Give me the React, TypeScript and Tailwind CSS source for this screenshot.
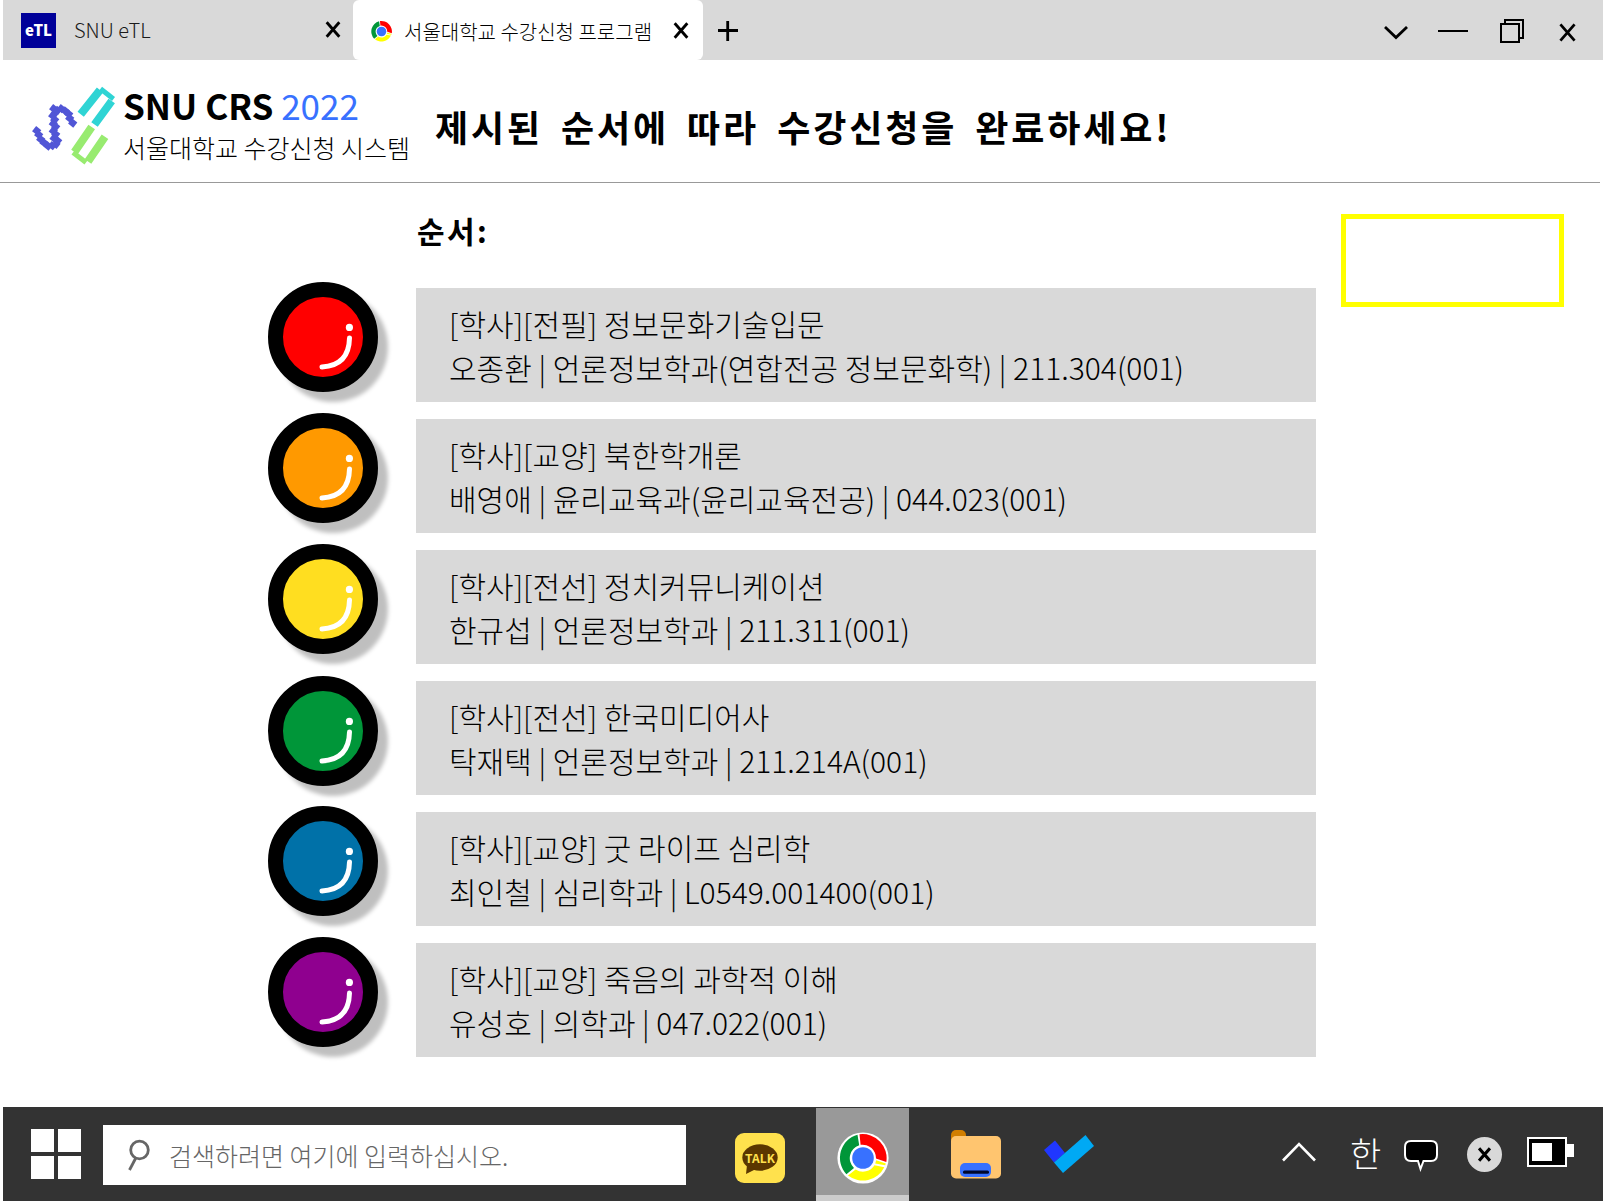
import React from "react";

const KR = "font-['Noto_Sans_CJK_KR',sans-serif]";

const courses = [
  { color: "bg-[#ff0000]", title: "[학사][전필] 정보문화기술입문", info: "오종환 | 언론정보학과(연합전공 정보문화학) | 211.304(001)" },
  { color: "bg-[#ff9900]", title: "[학사][교양] 북한학개론", info: "배영애 | 윤리교육과(윤리교육전공) | 044.023(001)" },
  { color: "bg-[#ffde20]", title: "[학사][전선] 정치커뮤니케이션", info: "한규섭 | 언론정보학과 | 211.311(001)" },
  { color: "mt-px -mb-px bg-[#009639]", title: "[학사][전선] 한국미디어사", info: "탁재택 | 언론정보학과 | 211.214A(001)" },
  { color: "bg-[#0071a8]", title: "[학사][교양] 굿 라이프 심리학", info: "최인철 | 심리학과 | L0549.001400(001)" },
  { color: "bg-[#8f008f]", title: "[학사][교양] 죽음의 과학적 이해", info: "유성호 | 의학과 | 047.022(001)" },
];

function Cross({ className, width = 3 }: { className: string; width?: number }) {
  return (
    <svg viewBox="0 0 16 18" className={className} stroke="#000" strokeWidth={width} fill="none">
      <path d="M1.3 1.3 L14.7 16.7 M14.7 1.3 L1.3 16.7" strokeLinecap="butt" />
    </svg>
  );
}

function Chrome({ className }: { className: string }) {
  return (
    <svg viewBox="0 0 52 52" className={className}>
      <circle cx="26" cy="26" r="25.6" fill="#fff" />
      <path d="M20.5 2.7 A24 24 0 0 0 9.4 42.2 L17 36 A13.5 13.5 0 0 1 22.2 13.3 Z" fill="#009639" />
      <path d="M22.5 2.3 A24 24 0 0 1 49.3 30 L39 26.5 A13.5 13.5 0 0 0 23.6 12.8 Z" fill="#ff0000" />
      <path d="M39.2 28.2 L48.8 31.5 L48.2 33.3 L38.2 31.6 Z" fill="#ffff00" />
      <path d="M11 43.5 A24 24 0 0 0 47.3 35.2 L37.5 33.3 A13.5 13.5 0 0 1 18.6 37.4 Z" fill="#ffff00" />
      <circle cx="26" cy="26" r="10.8" fill="#3871ff" />
    </svg>
  );
}

function Tabs() {
  return (
    <div className="ml-[3px] flex h-[60px] bg-[#d9d9d9]">
      <div className="flex w-[350px] items-center">
        <div className="ml-[18px] flex size-[35px] items-center justify-center bg-[#000099] pb-[1px] text-[15px] font-black leading-none text-white">
          eTL
        </div>
        <span className="ml-[18px] text-[20px] font-light leading-none text-[#1a1a1a]">SNU eTL</span>
        <Cross className="mr-[12px] mb-[2px] ml-auto h-[17px] w-[16px]" />
      </div>
      <div className="flex w-[350px] items-center rounded-[6px] bg-white">
        <Chrome className="mt-[3px] ml-[17px] size-[23px]" />
        <span className="mt-[4px] ml-[11px] text-[20px] font-light leading-none whitespace-nowrap text-black">서울대학교 수강신청 프로그램</span>
        <Cross className="mr-[14px] ml-auto h-[17px] w-[16px]" />
      </div>
      <svg viewBox="0 0 20 20" className="mt-[21px] ml-[15px] size-[20px]" stroke="#000" strokeWidth="2.8">
        <path d="M0 9.5H20M9.7 0V20" />
      </svg>
      <div className="mr-[27px] ml-auto flex items-center">
        <svg viewBox="0 0 24 14" className="mt-[5px] h-[14px] w-[24px]" fill="none" stroke="#000" strokeWidth="2.8">
          <path d="M1 1 L12 11.5 L23 1" />
        </svg>
        <div className="mt-[2px] ml-[30px] h-[2px] w-[30px] bg-black" />
        <svg viewBox="0 0 24 24" className="mt-[2px] ml-[32px] size-[24px]" fill="none" stroke="#000" strokeWidth="2">
          <path d="M1 5H19V23H1Z M5 5V1H23V19H19" />
        </svg>
        <Cross className="mt-[4px] ml-[35px] h-[19px] w-[17px]" width={2.6} />
      </div>
    </div>
  );
}

// Centres of the tilted blocks that form the S of the logo.
const blocks = [
  [6.7, 46.7], [8.7, 50.7], [10.7, 55.3], [14, 58.7], [18, 62], [22.3, 61.7], [26, 60.3], [27.7, 56.7],
  [24, 54.3], [25.7, 50.3], [23.3, 47], [25.7, 42.7], [23.3, 39.7], [24.7, 35.7], [22.7, 31.7], [25.3, 28.7],
  [23.7, 24.7], [27.5, 26.3], [31.3, 24.7], [35.3, 27], [38.7, 30], [39.7, 34.3], [42.7, 39],
];

function Logo() {
  return (
    <svg viewBox="0 0 90 84" className="mt-[24px] ml-[30px] h-[84px] w-[90px] shrink-0" fill="none">
      <path d="M50.700 30.300 L70 6 M81.700 17 L64.500 40.500" stroke="#2fd4d4" strokeWidth="8" />
      <path d="M70.500 4.800 L83.500 15" stroke="#2fd4d4" strokeWidth="5" />
      <path d="M61.700 43 L44.500 68 M75 52.700 L58 77.500" stroke="#98eb70" strokeWidth="8" />
      <path d="M43 68.500 L56 78.500" stroke="#98eb70" strokeWidth="5" />
      {blocks.map(([x, y], i) => (
        <rect key={i} x={x - 3.3} y={y - 3.3} width="6.600" height="6.600" fill="#5156d6" transform={`rotate(38 ${x} ${y})`} />
      ))}
    </svg>
  );
}

function Header() {
  return (
    <header className="mr-[3px] flex h-[123px] border-b border-[#999]">
      <Logo />
      <div className="ml-[3px] flex w-[300px] shrink-0 flex-col whitespace-nowrap text-black">
        <div className="mt-[19px] text-[35px] leading-[52px]">
          <span className="font-bold">SNU CRS</span> <span className="text-[#3871ff]">2022</span>
        </div>
        <div className="-mt-[2px] text-[25px] font-light leading-[36px]">서울대학교 수강신청 시스템</div>
      </div>
      <h1 className="mt-[41px] ml-[12px] text-[36px] font-bold leading-[50px] tracking-[2.88px] whitespace-nowrap [word-spacing:7px]">
        제시된 순서에 따라 수강신청을 완료하세요!
      </h1>
    </header>
  );
}

function Knob({ color }: { color: string }) {
  return (
    <div className={"size-[110px] shrink-0 rounded-full border-[15px] border-black shadow-[10px_10px_4px_rgba(0,0,0,0.25)] " + color}>
      <svg viewBox="0 0 80 80" className="size-[80px]" fill="none">
        <circle cx="66.400" cy="30.400" r="3.600" fill="#fff" />
        <path d="M66.500 41 Q66 68.500 39 70" stroke="#fff" strokeWidth="5" strokeLinecap="round" />
      </svg>
    </div>
  );
}

function Taskbar() {
  return (
    <footer className="ml-[3px] flex h-[94px] bg-[#333]">
      <div className="mt-[22px] ml-[28px] grid h-[50px] w-[50px] shrink-0 grid-cols-2 gap-[4px]">
        <div className="bg-white" />
        <div className="bg-white" />
        <div className="bg-white" />
        <div className="bg-white" />
      </div>
      <div className="mt-[18px] ml-[22px] flex h-[60px] w-[583px] shrink-0 items-center bg-white">
        <svg viewBox="0 0 22 32" className="-mt-[1px] ml-[25px] h-[32px] w-[22px]" fill="none" stroke="#666" strokeWidth="2.800">
          <circle cx="11.500" cy="11" r="8.800" />
          <path d="M7.800 19 L1.500 31" />
        </svg>
        <span className="ml-[19px] text-[25px] font-light leading-none whitespace-nowrap text-[#666]">검색하려면 여기에 입력하십시오.</span>
      </div>
      <div className="relative mt-[26px] ml-[49px] flex size-[50px] items-center justify-center rounded-[9px] bg-[#ffe14d]">
        <svg viewBox="0 0 36 30" className="absolute top-[11px] left-[7px] h-[30px] w-[36px]" fill="#5b3700">
          <ellipse cx="18" cy="13.500" rx="17.700" ry="13.200" />
          <path d="M5 21 L4 30 L14 25 Z" />
        </svg>
        <span className="relative text-[12px] font-bold leading-none text-[#ffe14d]">TALK</span>
      </div>
      <div className="mt-[1px] ml-[31px] flex h-[93px] w-[93px] justify-center border-b-[6px] border-[#ccc] bg-[#999]">
        <Chrome className="mt-[24px] size-[52px]" />
      </div>
      <svg viewBox="0 0 50 50" className="mt-[22px] ml-[42px] size-[50px]">
        <rect x="0" y="1" width="15" height="20" rx="5" fill="#d17e00" />
        <rect x="0" y="7" width="50" height="42.500" rx="5" fill="#ffc56f" />
        <rect x="9" y="34" width="31" height="14" rx="5" fill="#3871ff" />
        <rect x="12" y="41.500" width="26" height="3.200" rx="1.500" fill="#00082e" />
      </svg>
      <svg viewBox="0 0 50 38" className="mt-[28px] ml-[43px] h-[38px] w-[50px]">
        <path d="M0 15 L11 5.500 L21 18 L10 27.500 Z" fill="#2037ff" />
        <path d="M10 27.500 L41.500 0 L50 11 L19 38 Z" fill="#00a9f4" />
      </svg>
      <div className="mr-[29px] ml-auto flex items-start">
        <svg viewBox="0 0 34 20" className="mt-[35px] h-[20px] w-[34px]" fill="none" stroke="#fff" strokeWidth="2.600">
          <path d="M1 18.500 L17 2 L33 18.500" />
        </svg>
        <span className="mt-[28px] ml-[34px] w-[34px] text-[34px] font-light leading-[36px] text-white">한</span>
        <svg viewBox="0 0 34 32" className="mt-[33px] ml-[20px] h-[32px] w-[34px]" fill="#000" stroke="#fff" strokeWidth="2">
          <path d="M7 1H27Q33 1 33 7V15Q33 21 27 21H19.500L16.500 29L14 21H7Q1 21 1 15V7Q1 1 7 1Z" />
        </svg>
        <div className="mt-[30px] ml-[29px] flex size-[35px] items-center justify-center rounded-full bg-[#d9d9d9]">
          <Cross className="h-[15px] w-[13px]" width={3.8} />
        </div>
        <svg viewBox="0 0 47 30" className="mt-[30px] ml-[25px] h-[30px] w-[47px]">
          <rect x="1" y="1" width="38" height="28" fill="#000" stroke="#fff" strokeWidth="2" />
          <rect x="5" y="6" width="20" height="18" fill="#fff" />
          <rect x="40" y="7" width="7" height="13" fill="#fff" />
        </svg>
      </div>
    </footer>
  );
}

export default function App() {
  return (
    <div className={"flex h-[1201px] w-[1603px] flex-col overflow-hidden bg-white text-black " + KR}>
      <Tabs />
      <Header />
      <main className="flex flex-1">
        <div className="ml-[268px] w-[1048px]">
          <div className="mt-[26px] ml-[149px] h-[42px] text-[30px] font-bold leading-[42px] tracking-[2.400px]">순서:</div>
          <div className="mt-[31px] flex flex-col gap-[21px]">
            {courses.map((c) => (
              <div key={c.title} className="flex gap-[38px]">
                <Knob color={c.color} />
                <div className="mt-[6px] -mb-[10px] h-[114px] flex-1 bg-[#d9d9d9] pt-[12.500px] pl-[33px] text-[30px] font-light leading-[44px] whitespace-nowrap">
                  <p>{c.title}</p>
                  <p>{c.info}</p>
                </div>
              </div>
            ))}
          </div>
        </div>
        <div className="mt-[31px] ml-[25px] h-[93px] w-[223px] border-[5px] border-[#ffff00]" />
      </main>
      <Taskbar />
    </div>
  );
}
